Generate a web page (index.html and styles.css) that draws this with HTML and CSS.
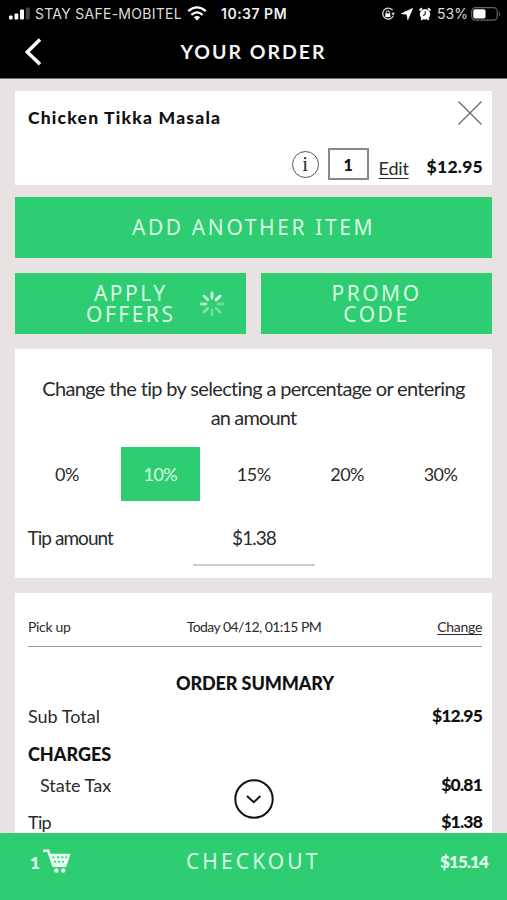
FILE: index.html
```
<!DOCTYPE html>
<html lang="en">
<head>
<meta charset="utf-8">
<title>Your Order</title>
<link rel="stylesheet" href="styles.css">
</head>
<body>
<div class="app">
  <header class="top">
    <div class="status">
      <svg class="signal" width="22" height="13" viewBox="0 0 22 13"><rect x="0" y="8.5" width="3.6" height="4" rx="1" fill="#fff"/><rect x="5.5" y="6.5" width="3.8" height="6" rx="1" fill="#fff"/><rect x="11" y="2.5" width="4" height="10" rx="1" fill="#fff"/><rect x="16.8" y="0.5" width="4" height="12" rx="1" fill="#444"/></svg>
      <span class="carrier">STAY SAFE-MOBITEL</span>
      <svg class="wifi" width="20" height="15" viewBox="0 0 20 15" fill="none" stroke="#fff" stroke-width="2.3"><path d="M1.2 5.2Q10-2.4 18.8 5.2"/><path d="M4.4 8.8Q10 4 15.600 8.800"/><path d="M6.900 11.200Q10 8.600 13.100 11.200L10 14.400Z" fill="#fff" stroke="none"/></svg>
      <span class="clock">10:37 PM</span>
      <svg class="lock" width="14" height="14" viewBox="0 0 14 14"><path d="M11.600 3.200A5.500 5.500 0 1 0 12.400 8.600" fill="none" stroke="#ddd" stroke-width="1.200"/><path d="M10.300 5.800H14L12.200 8.500Z" fill="#ddd"/><rect x="4.300" y="6.400" width="5" height="3.700" fill="#fff"/><path d="M5.200 6.500V5.500a1.600 1.600 0 0 1 3.200 0v1" fill="none" stroke="#fff" stroke-width="1"/></svg>
      <svg class="arrow" width="12" height="12" viewBox="0 0 12 12"><path d="M11.800 0.300L0.200 5.700L5.800 6.300L6.800 11.800Z" fill="#fff" stroke="#fff" stroke-width=".6"/></svg>
      <svg class="alarm" width="12" height="14" viewBox="0 0 12 14"><circle cx="6" cy="7.300" r="5.200" fill="#fff"/><path d="M0.500 3.500L3 1.300M11.500 3.500L9 1.300M2.300 12.900L3.500 11.200M9.700 12.900L8.500 11.200" stroke="#fff" stroke-width="1.900"/><path d="M6.200 4.200V7.700L4 8.300" fill="none" stroke="#000" stroke-width="1"/></svg>
      <span class="percent">53%</span>
      <svg class="battery" width="30" height="14" viewBox="0 0 30 14"><rect x="0.700" y="0.700" width="25.600" height="12.400" rx="3.800" fill="none" stroke="#666" stroke-width="1.200"/><rect x="2.300" y="2.300" width="12.200" height="9.200" rx="1.800" fill="#fff"/><path d="M28 4.500Q30.200 6.900 28 9.300Z" fill="#666"/></svg>
    </div>
    <div class="nav">
      <svg class="back" width="18" height="28" viewBox="0 0 18 28"><path d="M16 1.500L3.300 14L16 26.300" fill="none" stroke="#fff" stroke-width="3.500"/></svg>
      <h1><span>YOUR ORDER</span></h1>
    </div>
  </header>

  <main>
    <section class="card item">
      <div class="item-head">
        <h2>Chicken Tikka Masala</h2>
        <svg width="26" height="26" viewBox="0 0 26 26"><path d="M1.500 1.500L24.500 24.500M24.500 1.500L1.500 24.500" stroke="#666" stroke-width="1.200"/></svg>
      </div>
      <div class="item-row">
        <span class="info">i</span>
        <span class="qty">1</span>
        <a class="edit">Edit</a>
        <b class="price">$12.95</b>
      </div>
    </section>

    <div class="btn add"><span>ADD ANOTHER ITEM</span></div>
    <div class="pair">
      <div class="btn apply">
        <span>APPLY<br>OFFERS</span>
        <svg class="spin" width="26" height="26" viewBox="-13 -13 26 26" stroke="#fff" stroke-width="2.900" stroke-linecap="round"><path d="M0-6V-11" opacity=".75"/><path d="M4.200-4.200L8-8" opacity=".9"/><path d="M6 0H11" opacity=".3"/><path d="M4.200 4.200L8 8" opacity=".32"/><path d="M0 6V11" opacity=".3"/><path d="M-4.200 4.200L-8 8" opacity=".4"/><path d="M-6 0H-11" opacity=".6"/><path d="M-4.200-4.200L-8-8" opacity=".68"/></svg>
      </div>
      <div class="btn"><span>PROMO<br>CODE</span></div>
    </div>

    <section class="card tip">
      <p class="tip-text"><span class="t1">Change the tip by selecting a percentage or entering</span><br><span class="t2">an amount</span></p>
      <div class="choices">
        <span>0%</span><span class="on">10%</span><span>15%</span><span>20%</span><span>30%</span>
      </div>
      <div class="amount">
        <span class="label">Tip amount</span>
        <span class="field">$1.38</span>
      </div>
    </section>

    <section class="card summary">
      <div class="pickup">
        <span class="pu">Pick up</span>
        <span class="when">Today 04/12, 01:15 PM</span>
        <a class="change">Change</a>
      </div>
      <h3>ORDER SUMMARY</h3>
      <div class="line sub"><span>Sub Total</span><b>$12.95</b></div>
      <div class="line charges"><strong>CHARGES</strong></div>
      <div class="line tax"><span>State Tax</span><b>$0.81</b></div>
      <div class="line last"><span>Tip</span><b>$1.38</b></div>
      <svg class="more" width="40" height="40" viewBox="0 0 40 40" fill="none" stroke="#111"><circle cx="20" cy="20" r="18.700" stroke-width="2"/><path d="M13 17L19.700 23.300L26.400 17" stroke-width="1.900"/></svg>
    </section>
  </main>

  <footer>
    <span class="count">1</span>
    <svg class="cart" width="29" height="25" viewBox="0 0 29 25"><path d="M1 1.800H6.200L11.500 16.800H24.500" fill="none" stroke="#e6fff0" stroke-width="2.600"/><path d="M7 4.800H28.500L25 16H11Z" fill="#e6fff0"/><g fill="#2fcd71"><path d="M10.500 7.600h2v1.600h-2zM15 7.600h2v1.600h-2zM19.400 7.600h2v1.600h-2zM23.400 7.600h1.600v1.600h-1.600zM12 12h2v1.400h-2zM16 12h2v1.400h-2zM20 12h2v1.400h-2z"/></g><circle cx="14.300" cy="21.500" r="2.200" fill="#e6fff0"/><circle cx="21.300" cy="21.500" r="2.200" fill="#e6fff0"/></svg>
    <span class="checkout">CHECKOUT</span>
    <b class="total">$15.14</b>
  </footer>
</div>
</body>
</html>
```

FILE: styles.css
```
* { box-sizing: border-box; }
body { margin: 0; background: #e8e3e2; font-family: Lato, sans-serif; color: #2b2b2b; }
h1, h2, h3, p { margin: 0; }
svg { display: block; flex: none; }
.app { width: 507px; height: 900px; display: flex; flex-direction: column; overflow: hidden; }
span, a, b, strong { white-space: nowrap; }

.top { height: 79px; flex: none; background: #000; border-bottom: 1px solid #777; color: #fff; }
.status { height: 27px; display: flex; align-items: center; padding-left: 9px; font-family: Inter, sans-serif; font-size: 14px; }
.signal { margin-right: 4px; }
.carrier { width: 148px; color: #ddd; letter-spacing: 0.270px; }
.wifi { margin: 0 14px 0 4px; }
.clock { width: 160px; font-weight: 600; color: #eee; letter-spacing: 0.500px; }
.lock { margin-right: 6px; }
.arrow { margin-right: 6px; }
.alarm { margin-right: 6px; }
.percent { width: 34px; color: #ddd; }
.nav { height: 51px; display: flex; align-items: center; padding: 0 24px; }
.back { margin-top: -2px; }
h1 { flex: 1; font-size: 19.500px; line-height: 24px; font-weight: 700; letter-spacing: 2px; text-align: center; padding: 0 18px 1px 0; color: #f4f4f4; }

main { flex: 1; min-height: 0; padding: 12px 15px 0; display: flex; flex-direction: column; overflow: hidden; }
.card { background: #fff; flex: none; }
.item { height: 94px; padding: 9px 9px 0 13px; margin-bottom: 12.400px; }
.item-head { display: flex; justify-content: space-between; align-items: flex-start; height: 47px; }
h2 { font-size: 17.500px; line-height: 35px; font-weight: 900; letter-spacing: 1.200px; color: #111; }
.item-row { display: flex; height: 33px; align-items: center; justify-content: flex-end; }
.info { width: 27px; height: 27px; border: 1.500px solid #555; border-radius: 50%; font: 21px/24px "Liberation Serif", serif; text-align: center; margin: 2px 9px 0 0; }
.qty { width: 41px; height: 32px; border: 2px solid #888; font-size: 16px; line-height: 30px; font-weight: 900; text-align: center; color: #111; margin-right: 10px; }
.edit { font-size: 18px; width: 30px; letter-spacing: -0.200px; text-decoration: underline; text-underline-offset: 3px; margin: 8px 18px 0 0; }
.price { font-size: 17.500px; font-weight: 900; color: #111; margin-top: 6px; letter-spacing: 0.250px; }

.btn { background: #2fcd71; height: 61px; flex: none; display: flex; align-items: center; justify-content: center; text-align: center; color: #d9fbe5; font: 21px/21px "Noto Sans", sans-serif; letter-spacing: 2.600px; }
.add { margin-bottom: 15px; padding-bottom: 1px; }
.pair { display: grid; grid-template-columns: 1fr 1fr; gap: 15px; margin-bottom: 15px; }
.pair .btn { padding-top: 1px; letter-spacing: 2.500px; }
.apply { padding-left: 71px; justify-content: flex-start; gap: 24px; }

.tip { height: 229px; padding: 25px 12px 0; margin-bottom: 15px; }
.tip-text { text-align: center; font-size: 20px; line-height: 29px; }
.t1 { letter-spacing: -0.650px; }
.t2 { letter-spacing: -0.850px; }
.choices { display: grid; grid-template-columns: repeat(5, 1fr); gap: 14.500px; margin-top: 15px; padding: 0 0 0 0.500px; font-size: 18px; line-height: 54px; letter-spacing: -0.500px; text-align: center; }
.on { background: #2fcd71; color: #d9fbe5; }
.amount { display: flex; font-size: 19px; margin-top: 19px; line-height: 36px; letter-spacing: -0.950px; }
.label { width: 166px; padding-left: 0.500px; }
.field { width: 122px; height: 46px; border-bottom: 2px solid #ccc; text-align: center; }

.summary { position: relative; height: 300px; padding: 18px 10px 0 13px; }
.pickup { display: flex; justify-content: space-between; height: 36px; border-bottom: 1.500px solid #999; font-size: 14px; line-height: 31px; letter-spacing: -0.300px; }
.when { letter-spacing: -0.550px; }
.change { text-decoration: underline; text-underline-offset: 2px; }
h3 { text-align: center; font-size: 18px; font-weight: 900; line-height: 28px; margin-top: 22px; letter-spacing: -0.100px; color: #111; }
.line { display: flex; justify-content: space-between; font-size: 18px; line-height: 28px; }
.line b, .line strong { font-weight: 900; color: #111; }
.line b { font-size: 17.500px; letter-spacing: -0.800px; }
.sub { margin-top: 5px; }
.charges { margin-top: 10px; }
.tax { margin-top: 3px; padding-left: 12px; }
.last { margin-top: 9px; }
.last span { letter-spacing: -0.700px; }
.more { position: absolute; left: 219px; top: 186px; }

footer { height: 67px; flex: none; background: #2fcd71; color: #e6fff0; display: flex; align-items: center; padding: 0 19px 11px 30px; }
.count { font-size: 17px; font-weight: 900; width: 12px; padding-top: 3px; }
.cart { margin-top: 1px; }
.checkout { font: 21px "Noto Sans", sans-serif; letter-spacing: 3.100px; margin-left: 115px; flex: 1; color: #d9fbe5; }
.total { font-size: 17px; font-weight: 900; letter-spacing: -0.900px; }
```
